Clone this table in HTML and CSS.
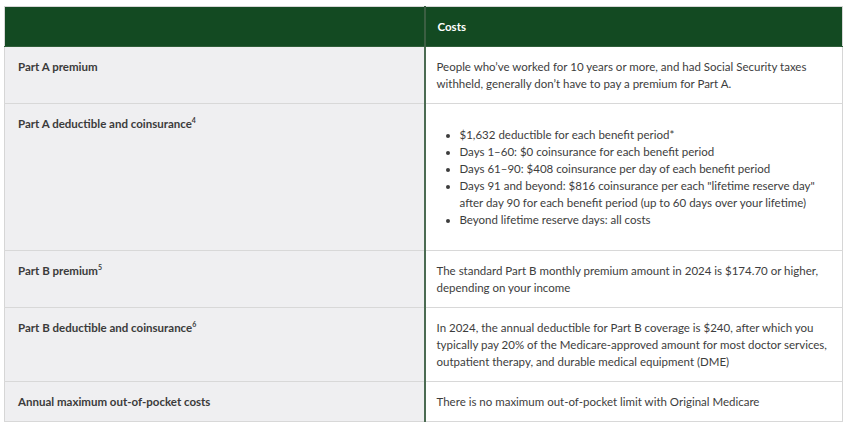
FILE: index.html
```html
<!DOCTYPE html>
<html lang="en">
<head>
<meta charset="utf-8">
<title>Original Medicare costs</title>
<link rel="stylesheet" href="styles.css">
</head>
<body>
<div class="page">
  <table class="costs">
    <thead>
      <tr>
        <th class="label-col"></th>
        <th class="value-col">Costs</th>
      </tr>
    </thead>
    <tbody>
      <tr class="r1">
        <td class="label">Part A premium</td>
        <td class="value">People who’ve worked for 10 years or more, and had Social Security taxes withheld, generally don’t have to pay a premium for Part A.</td>
      </tr>
      <tr class="r2">
        <td class="label">Part A deductible and coinsurance<sup>4</sup></td>
        <td class="value">
          <ul>
            <li>$1,632 deductible for each benefit period*</li>
            <li>Days 1–60: $0 coinsurance for each benefit period</li>
            <li>Days 61–90: $408 coinsurance per day of each benefit period</li>
            <li>Days 91 and beyond: $816 coinsurance per each "lifetime reserve day" after day 90 for each benefit period (up to 60 days over your lifetime)</li>
            <li>Beyond lifetime reserve days: all costs</li>
          </ul>
        </td>
      </tr>
      <tr class="r3">
        <td class="label">Part B premium<sup>5</sup></td>
        <td class="value">The standard Part B monthly premium amount in 2024 is $174.70 or higher, depending on your income</td>
      </tr>
      <tr class="r4">
        <td class="label">Part B deductible and coinsurance<sup>6</sup></td>
        <td class="value">In 2024, the annual deductible for Part B coverage is $240, after which you typically pay 20% of the Medicare-approved amount for most doctor services, outpatient therapy, and durable medical equipment (DME)</td>
      </tr>
      <tr class="r5">
        <td class="label">Annual maximum out-of-pocket costs</td>
        <td class="value">There is no maximum out-of-pocket limit with Original Medicare</td>
      </tr>
    </tbody>
  </table>
</div>
</body>
</html>
```

FILE: styles.css
```css
html, body {
  margin: 0;
  padding: 0;
  background: #ffffff;
}

.page {
  padding: 6px 4px 0 4px;
  font-family: "Lato", "Open Sans", sans-serif;
  font-size: 11.5px;
  line-height: 17px;
  color: #3d3d3d;
}

.costs {
  width: 839px;
  border-collapse: collapse;
  table-layout: fixed;
  border: 1px solid #d6d6d6;
}

.costs th {
  background: #134a22;
  color: #ffffff;
  font-weight: 700;
  text-align: left;
  height: 40px;
  padding: 0 12px;
  vertical-align: middle;
  box-sizing: border-box;
  border-bottom: 1px solid #2f5e39;
}

.label-col {
  width: 420px;
}

.costs td {
  vertical-align: top;
  padding: 11px 12px;
  border-bottom: 1px solid #d8d8d8;
}

.costs td.label {
  background: #efeff1;
  font-weight: 700;
  color: #3b3b3b;
  padding-left: 13px;
  border-right: 2px solid #4b6b52;
}

.costs th.label-col {
  border-right: 2px solid #3b5e42;
}

.costs td.value {
  background: #ffffff;
  padding-left: 11px;
}

sup {
  font-size: 7px;
  line-height: 1;
  vertical-align: baseline;
  position: relative;
  top: -5px;
}

ul {
  margin: 11px 0 11px 0;
  padding-left: 23px;
}

li {
  margin: 0;
}
```
